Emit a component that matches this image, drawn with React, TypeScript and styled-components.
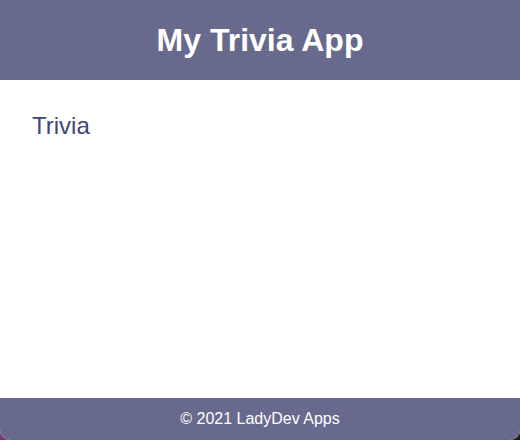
import React from 'react'
import styled, { createGlobalStyle } from 'styled-components'

const GlobalStyle = createGlobalStyle`
  html, body {
    margin: 0;
    padding: 0;
    height: 100%;
  }
  body {
    font-family: 'Liberation Sans', Arial, sans-serif;
    background: linear-gradient(to right, #8a2c6c, #3a2a3a 50%, #1c1c22);
  }
  #root {
    height: 100%;
  }
`

const Shell = styled.div`
  display: flex;
  flex-direction: column;
  height: 100%;
  background: #ffffff;
  border-radius: 0 0 10px 10px;
  overflow: hidden;
`

const Header = styled.header`
  height: 80px;
  flex-shrink: 0;
  display: flex;
  align-items: center;
  justify-content: center;
  background: #676a8c;
`

const Title = styled.h1`
  margin: 0;
  font-size: 32px;
  font-weight: 700;
  color: #ffffff;
`

const Main = styled.main`
  flex: 1;
  padding: 32px;
`

const SectionTitle = styled.h2`
  margin: 0;
  font-size: 24px;
  font-weight: 400;
  color: #3f4677;
`

const Footer = styled.footer`
  height: 42px;
  flex-shrink: 0;
  display: flex;
  align-items: center;
  justify-content: center;
  background: #676a8c;
  color: #ffffff;
  font-size: 16px;
`

export default function App() {
  return (
    <>
      <GlobalStyle />
      <Shell>
        <Header>
          <Title>My Trivia App</Title>
        </Header>
        <Main>
          <SectionTitle>Trivia</SectionTitle>
        </Main>
        <Footer>© 2021 LadyDev Apps</Footer>
      </Shell>
    </>
  )
}
